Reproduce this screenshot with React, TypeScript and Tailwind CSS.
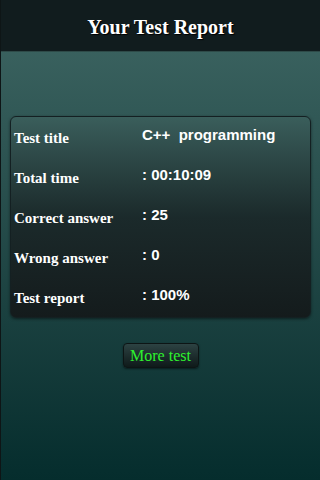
import React from 'react';

const rows = [
  { label: 'Test title', value: 'C++  programming' },
  { label: 'Total time', value: ': 00:10:09' },
  { label: 'Correct answer', value: ': 25' },
  { label: 'Wrong answer', value: ': 0' },
  { label: 'Test report', value: ': 100%' },
];

const App: React.FC = () => {
  return (
    <div className="w-[320px] h-[480px] flex flex-col border-l border-[#0e1516] bg-gradient-to-b from-[#3f6764] to-[#052d2d]">
      {/* Header */}
      <div className="h-[52px] shrink-0 bg-[#111c1e] border-b border-[#2e4a48] flex items-center justify-center pt-[2px]">
        <h1 className="font-['Liberation_Serif',serif] font-bold text-[20px] text-white [text-shadow:1px_1px_1px_#000]">
          Your Test Report
        </h1>
      </div>

      {/* Report card */}
      <div className="mt-[64px] mx-[9px] rounded-[6px] border border-[#142022] bg-gradient-to-b from-[#3a5e5b] via-[#1b2a2b] to-[#141b1c] shadow-[0_1px_3px_rgba(0,0,0,0.5)]">
        {rows.map((row) => (
          <div key={row.label} className="h-[40px] grid grid-cols-[128px_1fr] pl-[3px]">
            <div className="pt-[12px] font-['Liberation_Serif',serif] font-bold text-[15px] leading-[18px] text-white">
              {row.label}
            </div>
            <div className="pt-[9px] font-['Liberation_Sans',sans-serif] font-bold text-[15px] leading-[18px] text-white whitespace-pre">
              {row.value}
            </div>
          </div>
        ))}
      </div>

      {/* Button */}
      <div className="flex justify-center mt-[25px]">
        <button className="w-[76px] h-[25px] rounded-[4px] border border-[#0d1515] bg-gradient-to-b from-[#2d4343] to-[#0f1a1a] font-['Liberation_Serif',serif] text-[16px] leading-none text-[#2ef22e] shadow-[0_1px_2px_rgba(0,0,0,0.5)]">
          More test
        </button>
      </div>
    </div>
  );
};

export default App;
